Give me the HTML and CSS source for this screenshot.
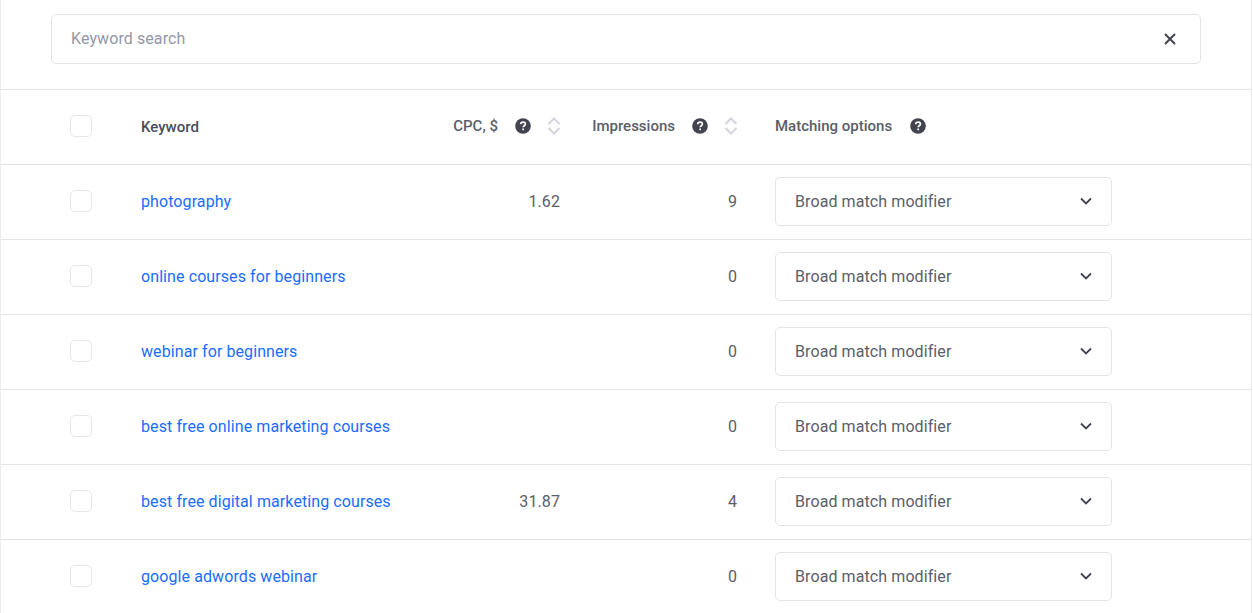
FILE: index.html
```html
<!DOCTYPE html>
<html lang="en">
<head>
    <meta charset="UTF-8">
    <meta name="viewport" content="width=device-width, initial-scale=1.0">
    <title>Keywords</title>
    <link rel="stylesheet" href="styles.css">
</head>
<body>
    <div class="panel">
        <div class="search-wrap">
            <div class="search-box">
                <span class="search-placeholder">Keyword search</span>
                <svg class="search-clear" width="14" height="14" viewBox="0 0 14 14"><path d="M2 2l10 10M12 2L2 12" stroke="#41444f" stroke-width="2" fill="none"/></svg>
            </div>
        </div>

        <div class="row head-row">
            <span class="checkbox"></span>
            <span class="head-keyword">Keyword</span>
            <div class="head-cell head-cpc">
                <span>CPC, $</span>
                <svg class="help" width="16" height="16" viewBox="0 0 16 16"><circle cx="8" cy="8" r="7.8" fill="#41444f"/><path d="M5.7 6.2c.1-1.400 1-2.100 2.400-2.100 1.300 0 2.300.8 2.300 1.900 0 1.700-2.200 1.700-2.200 3.300" stroke="#fff" stroke-width="1.700" fill="none"/><rect x="7.300" y="10.500" width="1.700" height="1.700" fill="#fff"/></svg>
                <svg class="sort" width="14" height="18" viewBox="0 0 14 18"><path d="M1.500 7l5.500-5.500 5.500 5.500M1.500 11l5.500 5.500 5.500-5.500" stroke="#d4d5dc" stroke-width="2" fill="none"/></svg>
            </div>
            <div class="head-cell head-imp">
                <span>Impressions</span>
                <svg class="help" width="16" height="16" viewBox="0 0 16 16"><circle cx="8" cy="8" r="7.8" fill="#41444f"/><path d="M5.7 6.2c.1-1.400 1-2.100 2.400-2.100 1.300 0 2.300.8 2.300 1.900 0 1.700-2.200 1.700-2.200 3.300" stroke="#fff" stroke-width="1.700" fill="none"/><rect x="7.300" y="10.500" width="1.700" height="1.700" fill="#fff"/></svg>
                <svg class="sort" width="14" height="18" viewBox="0 0 14 18"><path d="M1.500 7l5.500-5.500 5.500 5.500M1.500 11l5.500 5.500 5.500-5.500" stroke="#d4d5dc" stroke-width="2" fill="none"/></svg>
            </div>
            <div class="head-cell head-match">
                <span>Matching options</span>
                <svg class="help" width="16" height="16" viewBox="0 0 16 16"><circle cx="8" cy="8" r="7.8" fill="#41444f"/><path d="M5.7 6.2c.1-1.400 1-2.100 2.400-2.100 1.300 0 2.300.8 2.300 1.900 0 1.700-2.200 1.700-2.200 3.300" stroke="#fff" stroke-width="1.700" fill="none"/><rect x="7.300" y="10.500" width="1.700" height="1.700" fill="#fff"/></svg>
            </div>
        </div>

        <div class="row">
            <span class="checkbox"></span>
            <a class="keyword" href="#">photography</a>
            <span class="num">1.62</span>
            <span class="num">9</span>
            <div class="select"><span>Broad match modifier</span><svg width="12" height="8" viewBox="0 0 12 8"><path d="M1 1.500l5 5 5-5" stroke="#41444f" stroke-width="1.800" fill="none"/></svg></div>
        </div>
        <div class="row">
            <span class="checkbox"></span>
            <a class="keyword" href="#">online courses for beginners</a>
            <span class="num"></span>
            <span class="num">0</span>
            <div class="select"><span>Broad match modifier</span><svg width="12" height="8" viewBox="0 0 12 8"><path d="M1 1.500l5 5 5-5" stroke="#41444f" stroke-width="1.800" fill="none"/></svg></div>
        </div>
        <div class="row">
            <span class="checkbox"></span>
            <a class="keyword" href="#">webinar for beginners</a>
            <span class="num"></span>
            <span class="num">0</span>
            <div class="select"><span>Broad match modifier</span><svg width="12" height="8" viewBox="0 0 12 8"><path d="M1 1.500l5 5 5-5" stroke="#41444f" stroke-width="1.800" fill="none"/></svg></div>
        </div>
        <div class="row">
            <span class="checkbox"></span>
            <a class="keyword" href="#">best free online marketing courses</a>
            <span class="num"></span>
            <span class="num">0</span>
            <div class="select"><span>Broad match modifier</span><svg width="12" height="8" viewBox="0 0 12 8"><path d="M1 1.500l5 5 5-5" stroke="#41444f" stroke-width="1.800" fill="none"/></svg></div>
        </div>
        <div class="row">
            <span class="checkbox"></span>
            <a class="keyword" href="#">best free digital marketing courses</a>
            <span class="num">31.87</span>
            <span class="num">4</span>
            <div class="select"><span>Broad match modifier</span><svg width="12" height="8" viewBox="0 0 12 8"><path d="M1 1.500l5 5 5-5" stroke="#41444f" stroke-width="1.800" fill="none"/></svg></div>
        </div>
        <div class="row">
            <span class="checkbox"></span>
            <a class="keyword" href="#">google adwords webinar</a>
            <span class="num"></span>
            <span class="num">0</span>
            <div class="select"><span>Broad match modifier</span><svg width="12" height="8" viewBox="0 0 12 8"><path d="M1 1.500l5 5 5-5" stroke="#41444f" stroke-width="1.800" fill="none"/></svg></div>
        </div>
    </div>
</body>
</html>
```

FILE: styles.css
```css
html, body {
    margin: 0;
    height: 613px;
    overflow: hidden;
    background-color: #fff;
}

body {
    font-family: Roboto, Arial, sans-serif;
    font-size: 16px;
    letter-spacing: 0.09px;
    color: #5b5e69;
}

.panel {
    width: 1250px;
    height: 613px;
    overflow: hidden;
    border-left: 1px solid #eaebee;
    border-right: 1px solid #eaebee;
}

.search-wrap {
    height: 89px;
    padding: 14px 50px 0;
    box-sizing: border-box;
}

.search-box {
    display: flex;
    align-items: center;
    justify-content: space-between;
    height: 50px;
    box-sizing: border-box;
    padding: 0 23px 2px 19px;
    border: 1px solid #e3e4e8;
    border-radius: 5px;
}

.search-placeholder {
    color: #9497a3;
}

.search-clear {
    margin-top: 2px;
}

.row {
    display: grid;
    grid-template-columns: 71px 270px 149px 177px 337px;
    align-items: center;
    height: 75px;
    box-sizing: border-box;
    padding: 0 0 2px 69px;
    border-top: 1px solid #e3e4e8;
}

.head-row {
    font-size: 15px;
    font-weight: 500;
    letter-spacing: 0;
}

.checkbox {
    display: block;
    width: 22px;
    height: 22px;
    box-sizing: border-box;
    border: 1px solid #e6e7eb;
    border-radius: 5px;
}

.head-keyword {
    position: relative;
    top: 1px;
    color: #4a4d57;
}

.head-cell {
    display: flex;
    align-items: center;
    justify-content: flex-end;
    color: #5b5e69;
}

.head-cell span {
    margin-right: 17px;
}

.head-cell .sort {
    margin: 0 -1px 0 16px;
}

.head-match {
    justify-content: flex-start;
    margin-left: 38px;
    width: 299px;
}

.head-match span {
    margin-right: 18px;
}

.keyword {
    color: #1a6dff;
    text-decoration: none;
    white-space: nowrap;
}

.num {
    text-align: right;
}

.select {
    display: flex;
    align-items: center;
    justify-content: space-between;
    width: 337px;
    height: 49px;
    margin-left: 38px;
    box-sizing: border-box;
    padding: 0 19px;
    border: 1px solid #e3e4e8;
    border-radius: 5px;
}
```
